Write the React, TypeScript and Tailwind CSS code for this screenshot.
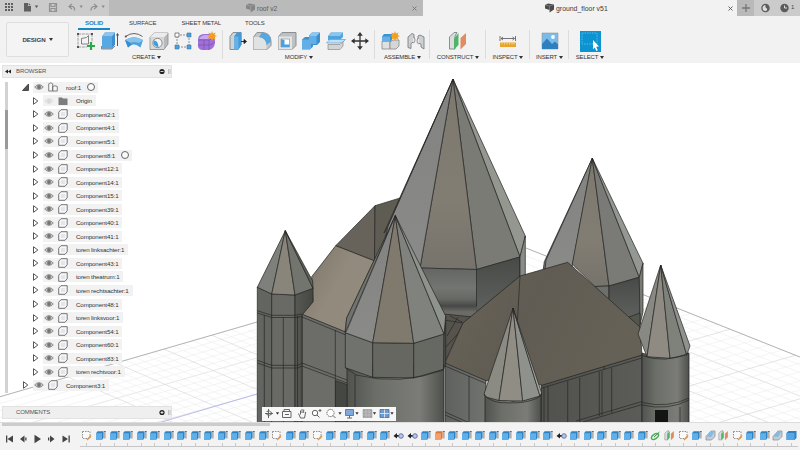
import React from 'react';

type Face = [string, string];

const INK = '#242422';

/* ---------- ribbon icons ---------- */

const Svg = ({ s = 20, children }: { s?: number; children: React.ReactNode }) => (
  <svg width={s} height={s} viewBox="0 0 20 20" className="block shrink-0">{children}</svg>
);

const SketchIcon = () => (
  <Svg>
    <path d="M2 3v13M2 3h14M16 3v8M2 16h9" stroke="#888" strokeWidth=".8" fill="none" strokeDasharray="3 .8" />
    <path d="M5.500 13V7.500Q12 7 12.500 4.500V13z" stroke="#666" strokeWidth=".8" fill="none" />
    <path d="M1 2h2v2H1zM15 2h2v2h-2zM1 15h2v2H1z" fill="#555" />
    <path d="M15 11v8M11 15h8" stroke="#2ba84a" strokeWidth="2.200" />
  </Svg>
);
const ExtrudeIcon = () => (
  <Svg>
    <path d="M2 5.500 5 1.500h10v12l-3 4H2z" fill="#3d8fd1" />
    <path d="M2 5.500 5 1.500h10l-3 4z" fill="#8cc6ef" />
    <path d="M2 5.500h10v12H2z" fill="#58a9e3" />
    <path d="M1.500 15v3h10.500l3-3" stroke="#8b8b8b" fill="none" />
    <path d="M17.500 3v12M16.500 4.500l1-2 1 2" stroke="#444" strokeWidth=".9" fill="none" />
  </Svg>
);
const RevolveIcon = () => (
  <Svg>
    <path d="M1 9Q10 3.500 19 9l-2.500 7.500-4-2.500q-2.500-1-5 0L4 16.500z" fill="#4ea3df" />
    <path d="M1 9Q10 3.500 19 9l-4 3q-4.500-2-9 0z" fill="#86c3ed" />
    <path d="M1 9 4 16.500l3.500-3L6 11.500z" fill="#3b8dcc" />
    <path d="M1.500 5.500Q10-.5 18.500 5.500" stroke="#555" strokeWidth=".9" fill="none" />
    <circle cx="1.800" cy="5.500" r="1.100" fill="#555" />
  </Svg>
);
const HoleIcon = () => (
  <Svg>
    <path d="M1 6.500 5 2h14v11l-4 5.500H1z" fill="#b7b9ba" stroke="#8c8c8c" strokeWidth=".8" />
    <path d="M1 6.500 5 2h14l-4 4.500z" fill="#ececec" />
    <path d="M1.500 6.500H15V18H1.500z" fill="#d6d8d9" />
    <circle cx="8.500" cy="12" r="4.600" fill="#f5f5f5" stroke="#777" strokeWidth=".8" />
    <path d="M5 9.500q4 0 4.500 6.300a4.300 4.300 0 0 1-4.500-6.300z" fill="#459bd9" />
  </Svg>
);
const PatternIcon = () => (
  <Svg>
    <path d="M4 4h12v12H4z" fill="none" stroke="#777" strokeWidth=".8" strokeDasharray="2 1" />
    <path d="M2 2h4v4H2z" fill="#fff" stroke="#666" strokeWidth=".8" />
    <path d="M14 2h4v4h-4zM2 14h4v4H2zM14 14h4v4h-4z" fill="#4ba0dc" stroke="#3a79a8" strokeWidth=".6" />
  </Svg>
);
const Star = () => (
  <path d="m15 0 1 2.400 2.600-1L17.600 4 20 5l-2.400 1 1 2.600-2.600-1L15 10l-1-2.400-2.600 1 1-2.600L10 5l2.400-1-1-2.600 2.600 1z" fill="#f0a020" />
);
const FormIcon = () => (
  <Svg>
    <path d="M1 9q0-6 6-6h6q5 1 5 7 0 8-6 9H5q-4-1-4-4z" fill="#a06fd8" />
    <path d="M2 8q2-4 7-4h5l-3 4z" fill="#c9a8ee" />
    <path d="M1 9h11q4-1 6-3M7 9v10M1 14h11q4-1 6-3M12 9v10" stroke="#7c50b6" strokeWidth=".7" fill="none" />
    <Star />
  </Svg>
);
const PressPullIcon = () => (
  <Svg>
    <path d="M2 5.500 5 1.500h8v12l-3 5H2z" fill="#cfd3d5" stroke="#7e8488" strokeWidth=".9" />
    <path d="M6 5.500 9 1.500h4.500v12l-3 5H6z" fill="#419ad9" />
    <path d="M6 5.500h4.500v13H6z" fill="#67b1e6" />
    <path d="M13 10.500h4M16 8.500l2.500 2-2.500 2z" stroke="#222" fill="#222" strokeWidth=".9" />
  </Svg>
);
const FilletIcon = () => (
  <Svg>
    <path d="M1.500 6 5 1.500h6q8 1 8 9v4L15 18.500H1.500z" fill="#c4c6c7" stroke="#83898b" strokeWidth=".9" />
    <path d="M1.500 6H7q7.500 1 7.500 9v3.500h-13z" fill="#e1e2e2" />
    <path d="M7 6 10 1.500q8.500.5 9 9L14.500 14Q14 7 7 6z" fill="#55a8e2" />
  </Svg>
);
const ShellIcon = () => (
  <Svg>
    <path d="M1.500 5.500 5 1.500h14v13l-4 4H1.500z" fill="#bec1c2" stroke="#83878a" strokeWidth=".9" />
    <path d="M1.500 5.500H15v13H1.500z" fill="#e3e4e4" />
    <path d="M4 8h8.500v8H4z" fill="#fff" stroke="#888" strokeWidth=".6" />
    <path d="M4 8l3.500 1v4.500h5V16H4z" fill="#4ba1dd" />
  </Svg>
);
const CombineIcon = () => (
  <Svg>
    <path d="M1 8.500 4 6h4V4.500L11 1.500h8v9.500l-3 3h-4v1.500l-3 3H1z" fill="#3b90d0" />
    <path d="M1 8.500h7V5h7.500v8H10v5H1z" fill="#62aee5" />
    <path d="m8 5 3-3.500h8L15.500 5z" fill="#8fc8ef" />
  </Svg>
);
const SplitIcon = () => (
  <Svg>
    <path d="M2 5 5 1.500h12V6l-3 3H2z" fill="#4fa4df" />
    <path d="m2 5 3-3.500h12L14 5z" fill="#8bc5ee" />
    <path d="M.5 12 4 8.500h15.500L16 12z" fill="#c3e0f5" stroke="#6ba9d3" strokeWidth=".8" />
    <path d="M2 13.500h12l3-3V15l-3 3.500H2z" fill="#d2d4d5" stroke="#8b8b8b" strokeWidth=".7" />
  </Svg>
);
const MoveIcon = () => (
  <Svg>
    <path d="M10 3v14M3 10h14" stroke="#333" strokeWidth="1.300" />
    <path d="m10 1 2.800 3.700H7.200zM10 19l2.800-3.700H7.200zM1 10l3.700-2.800v5.600zM19 10l-3.700-2.800v5.600z" fill="#333" />
  </Svg>
);
const NewComponentIcon = () => (
  <Svg>
    <path d="M2 10h8v8H2z" fill="#dfe0e0" stroke="#888" strokeWidth=".8" />
    <path d="M10 11l3-2h6v6l-3 3h-6z" fill="#d5d6d7" stroke="#888" strokeWidth=".8" />
    <path d="M2 5.500 4 3h8v6l-2 2H2z" fill="#3c92d3" />
    <path d="M2 5.500h8V11H2z" fill="#66b0e6" />
    <Star />
  </Svg>
);
const JointIcon = () => (
  <Svg>
    <path d="M2 6 6 2.500l2 1v7l-3 2v5l-3-1zM18 6l-4-2-2 1v7l3 1v3l3 2z" fill="#ced1d3" stroke="#7b8083" strokeWidth=".9" />
    <path d="M7 6q2 0 2 3t-2 3M13 7q-2 0-2 3t2 3" fill="#e7e7e7" stroke="#777" strokeWidth=".7" />
  </Svg>
);
const PlaneIcon = ({ s = 20 }: { s?: number }) => (
  <Svg s={s}>
    <path d="M1.500 6 6 1.500h3L7 5v13H1.500z" fill="#dcdede" stroke="#7f8486" strokeWidth=".9" />
    <path d="M6 7.500 10.500 2v12L6 18.500z" fill="#4fb46b" />
    <path d="M12.500 7 18 2v11l-5.500 5.500z" fill="#e08c62" />
  </Svg>
);
const MeasureIcon = () => (
  <Svg>
    <path d="M2 5v5M17.500 5v5M3 7.500h13.500M5 6 3 7.500 5 9M14.500 6l2 1.500-2 1.500" stroke="#666" strokeWidth=".9" fill="none" />
    <path d="M2 11.500h16v4.500H2z" fill="#e9a52b" />
    <path d="M4 11.500v2M6.500 11.500v2M9 11.500v2M11.500 11.500v2M14 11.500v2M16 11.500v2" stroke="#fff2c9" strokeWidth=".6" />
  </Svg>
);
const ImageIcon = () => (
  <Svg>
    <path d="M2 2h16v16H2z" fill="#79bbea" stroke="#999" strokeWidth=".6" />
    <path d="M2 18v-5l5-5.500 5 5.500 3-2.500 3 3V18z" fill="#2e7fbf" />
    <circle cx="13" cy="6" r="1.900" fill="#fff" />
  </Svg>
);
const SelectIcon = () => (
  <svg width="21" height="21" viewBox="0 0 21 21" className="block shrink-0">
    <path d="M0 0h21v21H0z" fill="#0b93d2" />
    <path d="M2 2h15v11H2z" fill="none" stroke="#7cc6ea" strokeWidth=".7" strokeDasharray="1.500 1" />
    <path d="m13 9 6 6.500-2.800.3 1.600 3.400-1.500.7-1.500-3.500-1.800 1.800z" fill="#fff" />
  </svg>
);

const Caret = () => (
  <svg width="4" height="3" viewBox="0 0 4 3" className="shrink-0">
    <path d="M0 0h4L2 3z" fill="#333" />
  </svg>
);

const Group = ({ label, w, icons, cell, last }: { label: string; w: string; cell: string; icons: React.ReactNode[]; last?: boolean }) => (
  <div className={'relative flex h-[34px] flex-col items-center ' + w}>
    <div className="flex h-[22px] items-center justify-center">
      {icons.map((ic, i) => <div key={i} className={'flex justify-center ' + cell}>{ic}</div>)}
    </div>
    <div className="flex h-[10px] items-center gap-[2px] text-[6px] leading-[10px] tracking-[-0.150px] text-[#333]">
      {label}<Caret />
    </div>
    {!last && <div className="absolute right-0 top-0 h-[29px] w-px bg-[#dcdcdc]" />}
  </div>
);

/* ---------- top bar ---------- */

const Cube = ({ c }: { c: string }) => (
  <svg width="9" height="10" viewBox="0 0 9 10" className="shrink-0">
    <path d="M0 2 3 .5l6 1v5L4.500 9.500V7L0 5.500z" fill={c} />
    <path d="m0 2 4.500 1L9 1.500M4.500 3v6.500" stroke="#bbb" strokeWidth=".4" fill="none" />
  </svg>
);

const Cross = ({ c }: { c: string }) => (
  <svg width="5" height="5" viewBox="0 0 5 5" className="shrink-0"><path d="m.5.500 4 4m0-4-4 4" stroke={c} strokeWidth=".9" /></svg>
);

const TopBar = () => (
  <div className="flex h-[16px] bg-[#cbcbcb] leading-[15px]">
    <div className="flex h-[15px] w-[109px] items-center pl-[5px]">
      <svg width="100" height="15" viewBox="5 0 100 15">
        <path d="M5 3h2v2H5zM8 3h2v2H8zM11 3h2v2h-2zM5 6h2v2H5zM8 6h2v2H8zM11 6h2v2h-2zM5 9h2v2H5zM8 9h2v2H8zM11 9h2v2h-2z" fill="#606060" />
        <path d="M24 3h4v3h3v5.500h-7zM28.700 3 31 5.300h-2.300z" fill="#606060" />
        <path d="M34.800 5.500h3.400l-1.700 2.600z" fill="#555" />
        <path d="M49.500 3.500h7v8h-7zM51 3.500v3h4v-3M51 11.500v-3h4v3" fill="none" stroke="#929292" strokeWidth="1.200" />
        <path d="M72 4 69 6.500 72 9M69 6.500h3.500q2.500.5 2 4" fill="none" stroke="#8f8f8f" strokeWidth="1.200" />
        <path d="M79.500 5.500h3.400l-1.700 2.600z" fill="#8a8a8a" />
        <path d="m94 4 3 2.500L94 9M97 6.500h-3.500q-2.500.5-2.500 4" fill="none" stroke="#8f8f8f" strokeWidth="1.200" />
        <path d="M101.500 5.500h3.400l-1.700 2.600z" fill="#8a8a8a" />
      </svg>
    </div>
    <div className="flex h-[16px] w-[314px] items-center bg-[#bababa] pl-[137px] pr-[6px] text-[6.600px] text-[#5a5a5a]">
      <Cube c="#858585" /><span className="ml-[2px] mt-px">roof v2</span>
      <span className="ml-auto"><Cross c="#777" /></span>
    </div>
    <div className="flex h-[16px] w-[314px] items-center bg-[#f2f2f2] pl-[122px] pr-[4px] text-[6.900px] text-[#3b3b3b]">
      <Cube c="#4b4b4b" /><span className="ml-[2px] mt-px">ground_floor v51</span>
      <span className="ml-auto"><Cross c="#555" /></span>
    </div>
    <div className="flex h-[16px] w-[17px] items-center justify-center bg-[#b9b9b9]">
      <svg width="8" height="8"><path d="M4 0v8M0 4h8" stroke="#777" strokeWidth="1.300" /></svg>
    </div>
    <div className="flex h-[15px] items-center pl-[6px] text-[6px] text-[#444]">
      <svg width="36" height="12" viewBox="0 0 36 12">
        <circle cx="5.500" cy="6" r="3.600" fill="#ddd" stroke="#5c5c5c" strokeWidth="1.300" />
        <path d="M5.500 2.500q3.500 0 3.500 3.500t-2.500 3q1.500-1.500 0-3-1.500 0-1-3.500z" fill="#5c5c5c" />
        <circle cx="24.500" cy="6" r="4.200" fill="#5c5c5c" />
        <path d="M24.500 3.500V6H27" stroke="#ddd" strokeWidth="1" fill="none" />
      </svg>
      <span className="-ml-[5px]">1</span>
    </div>
  </div>
);

const Ribbon = () => (
  <div className="flex h-[47px] bg-[#f2f2f2]">
    <div className="ml-[6px] mt-[6px] flex h-[35px] w-[63px] items-center justify-center gap-[3px] rounded-[2px] border border-[#dedede] bg-[#f4f4f4] text-[6.200px] font-bold tracking-[-0.100px] text-[#444]">
      <span>DESIGN</span><Caret />
    </div>
    <div className="ml-[3px] flex flex-col">
      <div className="flex h-[13px] items-start text-[6px] leading-[14px] tracking-[-0.150px] text-[#3b3b3b]">
        <div className="ml-[6px] h-[14px] w-[32px] border-b-2 border-[#1a86c3] text-center text-[6.200px] font-bold text-[#1a86c3]">SOLID</div>
        <div className="w-[71.500px] pl-[19px]">SURFACE</div>
        <div className="w-[63.500px]">SHEET METAL</div>
        <div>TOOLS</div>
      </div>
      <div className="flex pt-[1px]">
        <Group label="CREATE" w="w-[151px] pr-[2px]" cell="w-[24.200px]" icons={[<SketchIcon />, <ExtrudeIcon />, <RevolveIcon />, <HoleIcon />, <PatternIcon />, <FormIcon />]} />
        <Group label="MODIFY" w="w-[152px]" cell="w-[24.500px]" icons={[<PressPullIcon />, <FilletIcon />, <ShellIcon />, <CombineIcon />, <SplitIcon />, <MoveIcon />]} />
        <Group label="ASSEMBLE" w="w-[55px]" cell="w-[26px]" icons={[<NewComponentIcon />, <JointIcon />]} />
        <Group label="CONSTRUCT" w="w-[56px]" cell="w-[24px]" icons={[<PlaneIcon />]} />
        <Group label="INSPECT" w="w-[44px]" cell="w-[24px]" icons={[<MeasureIcon />]} />
        <Group label="INSERT" w="w-[39px]" cell="w-[24px]" icons={[<ImageIcon />]} />
        <Group label="SELECT" w="w-[42px]" cell="w-[24px]" icons={[<SelectIcon />]} last />
      </div>
    </div>
  </div>
);

/* ---------- 3D scene ---------- */

const backFaces: Face[] = [
  // rear roof
  ['335.7,245.7 375,205.700 374.5,261', '#67635b'],
  ['375,205.700 401,197.700 410,225 374.5,261', '#5f5c54'],
  // main spire
  ['453,79 525.3,236 520,257', '#94978f'],
  ['453,79 520,257 476.5,269.5', '#7b7b75'],
  ['453,79 476.5,269.5 420,268', 'url(#brown)'],
  ['453,79 420,268 380,262 388,226', 'url(#cool)'],
  ['453,79 388,226 384,233', '#70736e'],
  ['476.5,269.5 520,257 520,277 476.5,312', 'url(#drumR)'],
  ['520,257 525.3,236 525.3,275 520,277', '#8a8d87'],
  // right rear spire
  ['592.3,158.3 544.3,261.7 543.3,269 547,269', '#70736e'],
  ['592.3,158.3 546,260 545,270 572.3,266', 'url(#cool)'],
  ['592.3,158.3 572.3,264 595,286.500 609,286', 'url(#brown)'],
  ['592.3,158.3 609,286 639.3,277.3', '#7a7b76'],
  ['592.3,158.3 639.3,277.3 643,263.3', '#949892'],
  ['595,286.5 609,286 609,303', '#6d6f6a'],
  ['609,286 639.3,277.3 640,313 629,319 609,303', 'url(#drumR)'],
  ['639.3,277.3 643,263.3 643,312 640,325', '#787b76'],
  ['629,317 640,313 640,328', '#55554f'],
];

const valleyFaces: Face[] = [
  ['444,314 473,317 463,323 445,362', '#55534b'],
];

const wallFaces: Face[] = [
  ['445,362 486,380 486,424 445,424', 'url(#wallL)'],
  ['541,385 642,355 642,424 541,424', 'url(#wallR)'],
  ['302,314 347,332 347,424 302,424', '#6c6d69'],
];

const roofFaces: Face[] = [
  ['445,363 463,323 520,276 567.7,262.3 640,327 642,355 542.7,385 486,380.7', 'url(#roof)'],
  ['335.7,245.7 374,260.7 346.7,318 345,331.7 302.3,314.3 313,301 311.7,276.7', 'url(#roofL)'],
];

const leftTower: Face[] = [
  ['257.3,287 271.7,294 271.7,424 257.3,424', '#636560'],
  ['271.7,294 295,295 295,424 271.7,424', '#696a65'],
  ['295,295 313,288 313,302 302,315 302,424 295,424', 'url(#side)'],
  ['285.3,230.7 257.3,287.3 271.7,294', '#7e807b'],
  ['285.3,230.7 271.7,294 295,295', '#89857a'],
  ['285.3,230.7 295,295 313,288.300', '#72746e'],
  ['285.3,230.7 313,288.3 312.7,281', '#5e615c'],
];

const frontTower: Face[] = [
  ['347.500,365 444,365 444,424 347.500,424', 'url(#cyl)'],
  ['345.3,332.7 372.7,342.7 372.7,377.3 345.3,367.7', '#70726e'],
  ['372.7,342.7 413.7,343.3 413.7,378 372.7,377.3', '#666761'],
  ['413.7,343.3 444,334 443.5,369.3 413.7,378', '#666862'],
  ['444,334 445.7,316 445.7,363 443.5,369.3', '#50524e'],
  ['395.3,215.7 346.7,318 345.3,332.7', '#70736e'],
  ['395.3,215.7 347,330 345.3,332.7 372.7,342.7', 'url(#cool)'],
  ['395.3,215.7 372.7,342.7 413.7,343.3', '#7f796e'],
  ['395.3,215.7 413.7,343.3 444,334', '#80827d'],
  ['395.3,215.7 444,334 445.7,316', '#8f938e'],
];

const smallCone: Face[] = [
  ['513,308 484,394 486,397 499,400.5', '#8b8a83'],
  ['513,308 499,400.5 522.7,401', '#908d84'],
  ['513,308 522.7,401 540,396', '#8e918c'],
  ['513,308 540,396 541.7,393', '#a3a7a1'],
];

const rightCone: Face[] = [
  ['660.7,265 638,334 647,356.700', '#888983'],
  ['660.7,265 647,356.7 670,358.3', '#8f8b83'],
  ['660.7,265 670,358.3 686.7,355', '#7f817b'],
  ['660.7,265 686.7,355 690,346', '#90928d'],
];

const Faces = ({ list }: { list: Face[] }) => (
  <g stroke={INK} strokeWidth=".7" strokeLinejoin="round">
    {list.map(([p, f], i) => <polygon key={i} points={p} fill={f} />)}
  </g>
);

const Lines = ({ d, w = 0.65 }: { d: string; w?: number }) => (
  <path d={d} fill="none" stroke={INK} strokeWidth={w} />
);

const Grid = () => {
  const rows = Array.from({ length: 26 }, (_, i) => i);
  return (
    <g fill="none">
      <clipPath id="gl"><path d="M0 396.700 257 322V424H0z" /></clipPath>
      <clipPath id="gr"><path d="M526 248 800 357v67H526z" /></clipPath>
      <g clipPath="url(#gl)" strokeWidth=".6">
        {rows.map((i) => <path key={i} d={`M0 ${396.7 + i * 7}L257 ${322 + i * 7.200}`} stroke={i % 5 ? '#ededf1' : '#d6d7da'} />)}
        {rows.map((i) => <path key={'b' + i} d={`M${-40 + i * 16} 330l230 100`} stroke={i % 5 ? '#efeff1' : '#d4d4d6'} />)}
        <path d="M155 424 257 394" stroke="#a9aee8" strokeWidth=".8" />
      </g>
      <g clipPath="url(#gr)" strokeWidth=".6">
        {rows.map((i) => <path key={i} d={`M526 ${248 + i * 7.800}L800 ${357 + i * 7.800}`} stroke={i % 5 ? '#ededef' : '#d0d0d3'} />)}
        {rows.map((i) => <path key={'b' + i} d={`M520 ${300 + i * 9}l290-84`} stroke={i % 5 ? '#efeff0' : '#d2d2d5'} />)}
      </g>
      <path d="M0 396.700 257 322M526 248 800 357" stroke="#a3a3a3" strokeWidth=".8" />
    </g>
  );
};

const Scene = () => (
  <svg width="800" height="360" viewBox="0 63 800 360" className="block">
    <defs>
      <linearGradient id="brown" x1="0" y1="0" x2="0" y2="1"><stop offset="0" stopColor="#7e796f" /><stop offset=".65" stopColor="#827d73" /><stop offset="1" stopColor="#76736c" /></linearGradient>
      <linearGradient id="cool" x1="0" y1="0" x2="0" y2="1"><stop offset="0" stopColor="#828381" /><stop offset="1" stopColor="#8a8b89" /></linearGradient>
      <linearGradient id="drumL" x1="0" y1="0" x2="0" y2="1"><stop offset="0" stopColor="#646662" /><stop offset=".4" stopColor="#737572" /><stop offset=".62" stopColor="#666864" /><stop offset=".76" stopColor="#484946" /><stop offset=".88" stopColor="#6b6c68" /><stop offset="1" stopColor="#6a6b67" /></linearGradient>
      <linearGradient id="drumR" x1="0" y1="0" x2="0" y2="1"><stop offset="0" stopColor="#474a46" /><stop offset="1" stopColor="#5e615d" /></linearGradient>
      <linearGradient id="roof" x1="0" y1="0" x2="1" y2=".3"><stop offset="0" stopColor="#6a6358" /><stop offset=".5" stopColor="#605c53" /><stop offset="1" stopColor="#656157" /></linearGradient>
      <linearGradient id="roofL" x1="0" y1=".2" x2=".45" y2=".5"><stop offset="0" stopColor="#6a665f" /><stop offset=".5" stopColor="#8a8175" /><stop offset="1" stopColor="#938a7e" /></linearGradient>
      <linearGradient id="wallL" x1="0" y1="0" x2="1" y2="0"><stop offset="0" stopColor="#5f615e" /><stop offset="1" stopColor="#71736f" /></linearGradient>
      <linearGradient id="wallR" x1="0" y1="0" x2="1" y2="0"><stop offset="0" stopColor="#51524d" /><stop offset="1" stopColor="#5b5c57" /></linearGradient>
      <linearGradient id="side" x1="0" y1="0" x2="1" y2="0"><stop offset="0" stopColor="#565853" /><stop offset="1" stopColor="#464743" /></linearGradient>
      <linearGradient id="cyl" x1="0" y1="0" x2="1" y2="0"><stop offset="0" stopColor="#51534f" /><stop offset=".3" stopColor="#6c6e68" /><stop offset=".75" stopColor="#7b7c77" /><stop offset="1" stopColor="#4e504c" /></linearGradient>
    </defs>
    <rect y="63" width="800" height="360" fill="#fff" />
    <Grid />
    <Faces list={backFaces} />
    <path d="M420 268 476.500 269.500V318H436z" fill="url(#drumL)" />
    <Lines d="M420 268 476.500 269.500V306" />
    <Faces list={valleyFaces} />
    <Lines d="M444 320 463 323M447 336 458 317M445 348 473 317M450 316 462 322" />
    <Faces list={wallFaces} />
    <Faces list={roofFaces} />
    <Lines d="M520 276 517.500 320M445 366 486 383.500M542 388 642 358M469 376V424M445 415 466 424M445 412 472 424M544 387V424M548 386V424M567.700 381V424M579.700 378V424M599.300 371.500V416M602 371V415.500M611.700 368V413M583 422 642 404.500M576 421 642 401.500M604 366.500V369.500" />
    <Lines d="M302 317 346 335M335.300 330V424M302 363 347 380M302 366 347 383" />
    <path d="M335.500 380.500 347 384.500V424H335.500z" fill="#454743" stroke={INK} strokeWidth=".6" />
    <Faces list={leftTower} />
    <Lines d="M257.300 310.700 271.700 315.300H295L302 314M257.300 313 271.700 317.500H295L302 316.500M257.300 360.300 271.700 365.300H298L302 363M257.300 363 271.700 368H298L302 366M264.300 315V424M283.300 317V424M297.500 316V424" />
    <Faces list={frontTower} />
    <Lines d="M345.300 367.700 356 375Q400 386 443.500 370M355 375V424" />
    <g>
      <path d="M485 394Q513 409 541 394V424H485z" fill="url(#cyl)" stroke={INK} strokeWidth=".75" />
      <Faces list={smallCone} />
      <Lines d="M484 394Q487 400 499 402.500 520 404 531 400.500 542 397 541.700 393" />
    </g>
    <g>
      <path d="M642 353Q665 362 689 353V424H642z" fill="url(#cyl)" stroke={INK} strokeWidth=".75" />
      <Faces list={rightCone} />
      <Lines d="M642 355.500Q665 364 689 353M642 405Q668 411 689 400M642 402.500Q668 408.500 689 398M680 407V424" />
      <path d="M655 410h13v14h-13z" fill="#141413" />
    </g>
  </svg>
);

/* ---------- browser tree ---------- */

type Node = { name: string; kind?: 'root' | 'folder' | 'top'; ring?: boolean };

const nodes: Node[] = [
  { name: 'roof:1', kind: 'root', ring: true },
  { name: 'Origin', kind: 'folder' },
  { name: 'Component2:1' }, { name: 'Component4:1' }, { name: 'Component5:1' },
  { name: 'Component8:1', ring: true },
  { name: 'Component12:1' }, { name: 'Component14:1' }, { name: 'Component15:1' },
  { name: 'Component39:1' }, { name: 'Component40:1' }, { name: 'Component41:1' },
  { name: 'toren linksachter:1' }, { name: 'Component43:1' }, { name: 'toren theatrum:1' },
  { name: 'toren rechtsachter:1' }, { name: 'Component48:1' }, { name: 'toren linksvoor:1' },
  { name: 'Component54:1' }, { name: 'Component60:1' }, { name: 'Component83:1' },
  { name: 'toren rechtvoor:1' }, { name: 'Component3:1', kind: 'top' },
];

const Eye = ({ off }: { off?: boolean }) => (
  <svg width="10" height="8" viewBox="0 0 10 8" className={'shrink-0 ' + (off ? 'opacity-20' : '')}>
    <path d="M.7 4Q5-.8 9.300 4 5 8.800 .7 4z" fill="#c4c4c4" stroke="#8a8a8a" strokeWidth=".9" />
    <circle cx="5" cy="4" r="1.900" fill="#747474" />
  </svg>
);

const NodeIcon = ({ kind }: { kind?: string }) => (
  <svg width="10" height="10" viewBox="0 0 10 10" className="shrink-0">
    {kind === 'folder' ? <path d="M.5 1.500h3.500l1 1h4.500v6.500H.5z" fill="#7d7d7d" />
      : kind === 'root' ? <path d="M.7 1.800q2-2 4 0V9h-4zM4.700 4.500q2-1.500 4.600 0V9H4.700z" fill="#f6f6f6" stroke="#666" strokeWidth=".8" />
      : <><path d="M.7 3.200 3 .7h6.200v6L7 9.300H.7z" fill="#f7f7f9" stroke="#666" strokeWidth=".9" strokeLinejoin="round" /><path d="M3 3h4v4H3z" fill="#e4e4ec" /></>}
  </svg>
);

const Row = ({ n }: { n: Node }) => {
  const outer = n.kind === 'root' || n.kind === 'top';
  return (
    <div className={'flex h-[13.560px] items-center ' + (outer ? 'pl-[14px]' : 'pl-[24px]')}>
      <svg width="8" height="8" viewBox="0 0 8 8" className="mr-[3px] shrink-0">
        {n.kind === 'root' ? <path d="M.5 7.500h6V1z" fill="#555" stroke="#333" strokeWidth=".8" />
          : <path d="M1.500.7v6.600L5.800 4z" fill="#fff" stroke="#444" strokeWidth=".9" />}
      </svg>
      <div className="flex h-[11px] items-center bg-[#f2f2f2] pl-[1px] pr-[4px]">
        <Eye off={n.kind === 'folder'} />
        <div className="ml-[4px] flex"><NodeIcon kind={n.kind} /></div>
        <span className="ml-[8px] whitespace-nowrap text-[6.200px] leading-[11px] tracking-[-0.120px] text-[#333]">{n.name}</span>
        {n.ring && <span className="ml-[6px] -mr-[1px] h-[8px] w-[8px] rounded-full border border-[#666] bg-[#fafafa]" />}
      </div>
    </div>
  );
};

const PanelBar = ({ label, plus }: { label: string; plus?: boolean }) => (
  <div className="flex h-[13px] w-[170px] items-center border border-[#e2e2e2] bg-[#efefef] text-[6px] tracking-[-0.100px] text-[#555]">
    <svg width="6" height="5" className="ml-[2px]">{!plus && <path d="M3 .5v4L0 2.500zM6 .5v4L3 2.500z" fill="#222" />}</svg>
    <span className="ml-[5px]">{label}</span>
    <svg width="12" height="7" viewBox="0 0 12 7" className="ml-auto">
      <circle cx="3" cy="3.500" r="2.600" fill="#222" />
      <path d={plus ? 'M1.500 3.500h3M3 2v3' : 'M1.500 3.500h3'} stroke="#fff" strokeWidth=".8" />
      <path d="M9.500 1v5M11 1v5" stroke="#aaa" strokeWidth=".7" />
    </svg>
  </div>
);

const Browser = () => (
  <div className="flex flex-col">
    <PanelBar label="BROWSER" />
    <div className="ml-[3px] mt-[2.500px] flex">
      <div className="mt-[1px] h-[311px] w-[3px] bg-[#d2d2d2] pt-[28px]"><div className="h-[39px] bg-[#999]" /></div>
      <div className="flex flex-col">{nodes.map((n) => <Row key={n.name} n={n} />)}</div>
    </div>
  </div>
);

const NavBar = () => (
  <svg width="134" height="14" viewBox="262 407 134 14" className="block bg-[#f7f7f7]">
    <g fill="none" stroke="#666" strokeWidth="1">
      <path d="M268.500 409v9M265 413.500h8M266.500 411.500q3-2 6 2-3 3-6 1" />
      <path d="M282.500 411.500h8.500v6h-8.500zM284 411.500v-2h5.500v2M285 414.500h4" />
      <path d="M298.500 413.500l2 4.500h4l1.200-6M300.500 414.500v-4M302 413v-4M303.700 413v-3.500" />
      <circle cx="315" cy="413" r="2.700" fill="#fff" /><path d="m317 415 2.500 2.500M318.500 410.500h3M320 409v3" />
      <circle cx="330.500" cy="413" r="3.600" fill="#fff" strokeDasharray="1.500 .7" /><path d="m333 415.500 2.500 2.500" />
    </g>
    <path d="M345.500 409.500h8v6h-8z" fill="#7fa9dc" stroke="#666" strokeWidth=".8" />
    <path d="M347 418h5M349.500 415.500v2.500" stroke="#666" />
    <path d="M363 409.500h9v8h-9z" fill="#a5a5a5" stroke="#888" strokeWidth=".5" />
    <path d="M363 412h9M363 415h9M366 409.500v8M369 409.500v8" stroke="#ccc" strokeWidth=".5" />
    <path d="M380 409.500h9v8h-9z" fill="#6f9bd4" stroke="#4a6a98" strokeWidth=".8" />
    <path d="M384.500 409.500v8M380 413.500h9" stroke="#eee" strokeWidth=".8" />
    {[277.500, 340, 357, 374.500, 392].map((x) => <path key={x} d={`M${x - 1.600} 412.300h3.200l-1.600 2.500z`} fill="#333" />)}
  </svg>
);

/* ---------- timeline ---------- */

const STEPS = 'SEEEEEEEEEEEEESEESEEEEEJJEOEEEEEEEEJEEEEEEGPSECPSEECB';

const StepIcon = ({ t }: { t: string }) => {
  if (t === 'P') return <PlaneIcon s={11} />;
  return (
    <svg width="11" height="11" viewBox="0 0 11 11" className="block">
      {t === 'S' && <><path d="M1.500 1.500h7.500v7H1.500z" fill="#fafafa" stroke="#777" strokeWidth=".8" strokeDasharray="1.500 1" /><path d="m6 10 4-4.500" stroke="#e8963c" strokeWidth="1.400" /></>}
      {(t === 'E' || t === 'O') && <>
        <path d="m1 3.200 1.600-2h6v6.600L7 10H1z" fill={t === 'O' ? '#d9763c' : '#2f82c4'} />
        <path d="M1 3.200h6V10H1z" fill={t === 'O' ? '#f2a06c' : '#5fb0e8'} />
        <path d="M9.900 1v7.500M9.200 2l.7-1 .7 1" stroke="#555" strokeWidth=".7" fill="none" />
      </>}
      {t === 'B' && <><path d="m.5 3 2-2h8v7l-2 2h-8z" fill="#2f82c4" /><path d="M.5 3h8v7h-8z" fill="#55a8e4" /></>}
      {t === 'J' && <><path d="M4 3 .5 6 4 8.500V6.800h2V5H4z" fill="#222" /><circle cx="8" cy="6" r="2.300" fill="#b9c4e6" stroke="#5d6f9f" strokeWidth=".9" /></>}
      {t === 'G' && <><ellipse cx="5" cy="6.500" rx="4" ry="2.200" fill="#dff2e1" stroke="#4daa5c" strokeWidth="1.400" transform="rotate(-35 5 6.500)" /><path d="M4 7 9.500 2" stroke="#3d8e4b" /></>}
      {t === 'C' && <><path d="M1 6.500 6 1h4v5.500L6.500 10H1z" fill="#c8cccf" stroke="#888" strokeWidth=".7" /><path d="M1.500 6.500 6 1.500 9 2.500 6 7z" fill="#7dbbe8" /></>}
    </svg>
  );
};

const Timeline = () => (
  <div className="flex h-[28px] flex-col border-t border-[#ddd] bg-[#f3f3f3]">
    <div className="ml-[2px] h-[3px] w-[268px] bg-[#cccccc]" />
    <div className="flex h-[24px]">
      <div className="w-[80.200px] shrink-0 pl-[5px] pt-[8px]">
        <svg width="67" height="10" viewBox="5 434 67 10" className="block" fill="#444">
          <path d="M6 435.500h1.300v7H6zM13 435.500v7l-5.500-3.500z" />
          <path d="M24.500 435.500v7L20 439zM25.200 437.500h1.300v3h-1.300z" />
          <path d="M34.500 434.700v8.600l6.500-4.300z" />
          <path d="M50 435.500v7l4.500-3.500zM48 437.500h1.300v3H48z" />
          <path d="M62.500 435.500v7L68 439zM68.500 435.500h1.300v7h-1.300z" />
        </svg>
      </div>
      <div className="flex shrink-0">
        {STEPS.split('').map((t, i) => (
          <div key={i} className="flex w-[13.560px] shrink-0 flex-col items-center pt-[4px]">
            <StepIcon t={t} />
            <div className="mt-[2px] h-[3px] w-px bg-[#c8c8c8]" />
            <div className="h-px w-full bg-[#c6c6c6]" />
          </div>
        ))}
      </div>
    </div>
  </div>
);

export default function App() {
  return (
    <div className="flex h-[450px] w-[800px] flex-col overflow-hidden bg-white font-['Liberation_Sans',Arial,sans-serif]">
      <TopBar />
      <Ribbon />
      <div className="relative h-[359px] overflow-hidden">
        <Scene />
        <div className="absolute left-[2px] top-[2px]"><Browser /></div>
        <div className="absolute left-[2px] top-[343px]"><PanelBar label="COMMENTS" plus /></div>
        <div className="absolute left-[262px] top-[344px]"><NavBar /></div>
      </div>
      <Timeline />
    </div>
  );
}
